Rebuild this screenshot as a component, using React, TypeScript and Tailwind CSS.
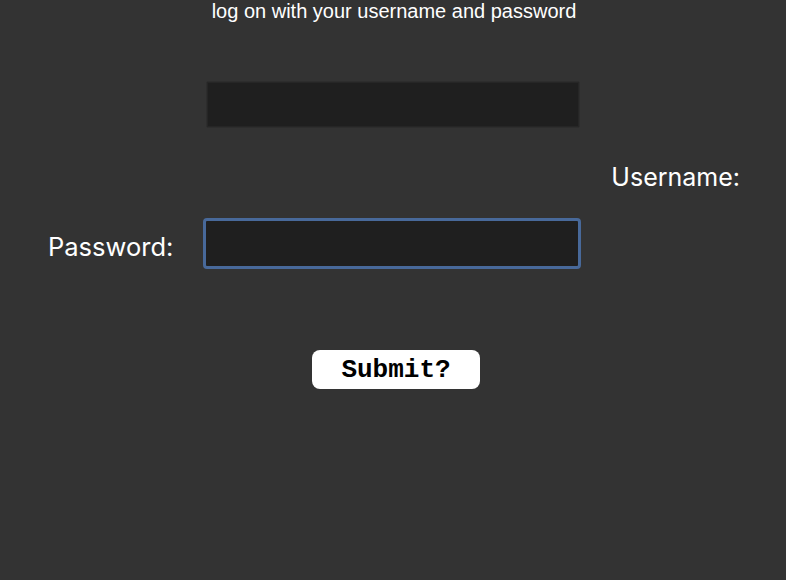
import React from "react";

export default function App() {
  return (
    <div className="w-[786px] h-[580px] bg-[#333333] overflow-hidden flex flex-col">
      <div className="flex justify-center pl-[2px]">
        <p className="text-white text-[20px] leading-[22px] font-['Liberation_Sans',Arial,sans-serif]">
          log on with your username and password
        </p>
      </div>
      <div className="flex justify-center mt-[60px]">
        <div className="w-[372px] h-[45px] bg-[#1f1f1f] shadow-[0_0_1px_rgba(0,0,0,0.6)] border border-[#262626]" />
      </div>
      <div className="flex justify-end pr-[46px] mt-[35px]">
        <span className="text-white text-[25px] leading-[30px] font-['Inter','Noto_Sans',sans-serif]">Username:</span>
      </div>
      <div className="flex items-center mt-[26px] pl-[48px]">
        <span className="w-[155px] pt-[6px] text-white text-[25.5px] leading-[30px] font-['Inter','Noto_Sans',sans-serif]">Password:</span>
        <input
          type="password"
          className="w-[378px] h-[51px] bg-[#1f1f1f] border-[3px] border-[#48699a] rounded-[4px] outline-none"
        />
      </div>
      <div className="flex justify-center mt-[81px] pl-[6px]">
        <button className="w-[168px] h-[39px] bg-white rounded-[8px] text-black text-[26px] leading-[30px] font-bold font-['Liberation_Mono','Courier_New',monospace]">
          Submit?
        </button>
      </div>
    </div>
  );
}
